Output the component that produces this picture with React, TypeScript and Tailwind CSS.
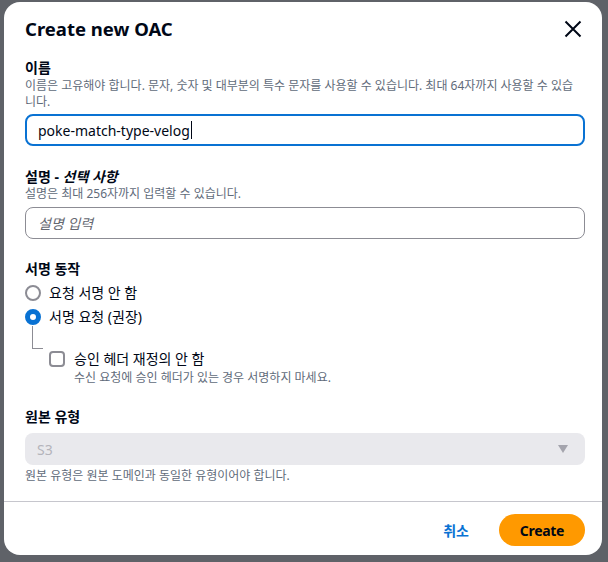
const font = {
  fontFamily: '"Noto Sans", "Noto Sans CJK KR", sans-serif',
};

const Label = ({ children }: { children: React.ReactNode }) => (
  <div className="text-[14px] font-bold leading-[18px] text-[#000716]">{children}</div>
);

const Hint = ({ children }: { children: React.ReactNode }) => (
  <div className="text-[12px] leading-[16px] text-[#5f6b7a]">{children}</div>
);

const CloseIcon = () => (
  <svg width="18" height="18" viewBox="0 0 18 18" fill="none">
    <path d="M1.5 1.5l15 15M16.5 1.5l-15 15" stroke="#000716" strokeWidth="2" />
  </svg>
);

const App = () => {
  return (
    <div
      className="w-[608px] h-[562px] bg-[#5f6268] pl-[4px] pt-[2px] overflow-hidden"
      style={font}
    >
      <div className="w-[598px] h-[553px] bg-white rounded-[16px] flex flex-col">
        {/* header */}
        <div className="flex items-center justify-between pl-[21px] pr-[20px] pt-[15px]">
          <h2 className="text-[18.5px] font-bold leading-[24px] text-[#000716]">
            Create new OAC
          </h2>
          <CloseIcon />
        </div>

        <div className="flex-1 pl-[21px] pr-[17px] pt-[18px]">
          {/* name */}
          <Label>이름</Label>
          <div className="mt-[1px] w-[550px]">
            <Hint>
              이름은 고유해야 합니다. 문자, 숫자 및 대부분의 특수 문자를 사용할 수 있습니다. 최대
              64자까지 사용할 수 있습니다.
            </Hint>
          </div>
          <div className="mt-[4px] h-[32px] rounded-[8px] border-2 border-[#0972d3] flex items-center px-[11px] text-[14px] text-[#000716]">
            poke-match-type-velog
            <span className="w-px h-[18px] bg-[#000716] ml-px" />
          </div>

          {/* description */}
          <div className="mt-[22px]">
            <Label>
              설명 - <i>선택 사항</i>
            </Label>
          </div>
          <Hint>설명은 최대 256자까지 입력할 수 있습니다.</Hint>
          <div className="mt-[5px] h-[32px] rounded-[8px] border border-[#8c8c94] flex items-center px-[12px] text-[14px] italic text-[#656871]">
            설명 입력
          </div>

          {/* signing behavior */}
          <div className="mt-[21px]">
            <Label>서명 동작</Label>
          </div>
          <div className="mt-[6px] flex flex-col gap-[6px]">
            <div className="flex items-center gap-[8px] text-[14px] text-[#000716] leading-[18px]">
              <span className="w-[16px] h-[16px] rounded-full border-2 border-[#8c8c94]" />
              요청 서명 안 함
            </div>
            <div className="flex items-center gap-[8px] text-[14px] text-[#000716] leading-[18px]">
              <span className="w-[16px] h-[16px] rounded-full border-[5px] border-[#0972d3] bg-white" />
              서명 요청 (권장)
            </div>
          </div>

          {/* tree connector to the nested option */}
          <div className="ml-[7px] w-[11px] h-[23px] border-l border-b border-[#8c8c94]" />
          <div className="pl-[24px] mt-[1px]">
            <div className="flex items-center gap-[9px] text-[14px] text-[#000716] leading-[18px]">
              <span className="w-[16px] h-[16px] rounded-[4px] border-2 border-[#8c8c94]" />
              승인 헤더 재정의 안 함
            </div>
            <div className="pl-[25px] mt-[2px]">
              <Hint>수신 요청에 승인 헤더가 있는 경우 서명하지 마세요.</Hint>
            </div>
          </div>

          {/* origin type */}
          <div className="mt-[22px]">
            <Label>원본 유형</Label>
          </div>
          <div className="mt-[7px] h-[32px] rounded-[8px] bg-[#e9e9ed] flex items-center justify-between pl-[12px] pr-[16px] text-[14px] text-[#b4b4bb]">
            S3
            <svg width="12" height="10" viewBox="0 0 12 10">
              <path d="M1 1h10L6 9z" fill="#a4a4ad" />
            </svg>
          </div>
          <div className="mt-[3px]">
            <Hint>원본 유형은 원본 도메인과 동일한 유형이어야 합니다.</Hint>
          </div>
        </div>

        {/* footer */}
        <div className="border-t border-[#c6c6cd] h-[54px] flex items-start justify-end gap-[30px] pr-[17px] pt-[12px]">
          <button className="mt-[6px] text-[14px] font-bold text-[#0972d3]">취소</button>
          <button className="h-[32px] w-[86px] rounded-full bg-[#ff9900] text-[14px] font-bold tracking-[-0.3px] text-[#000716]">
            Create
          </button>
        </div>
      </div>
    </div>
  );
};

export default App;
